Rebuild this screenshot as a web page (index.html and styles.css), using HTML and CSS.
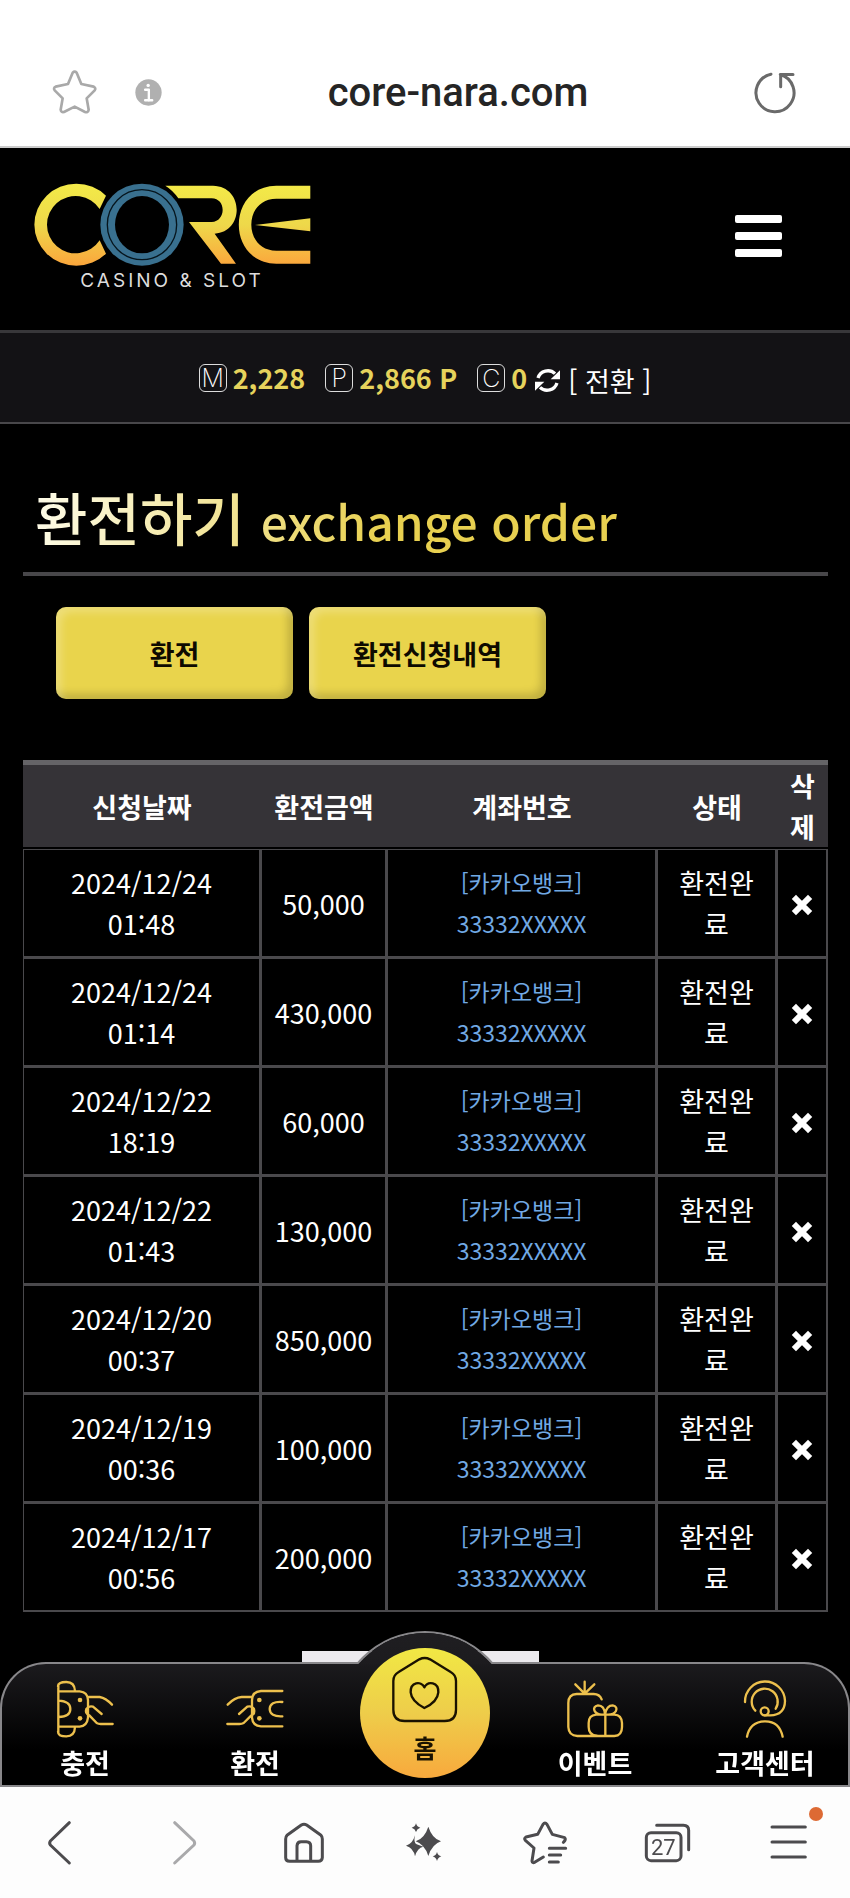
FILE: index.html
```html
<!DOCTYPE html>
<html lang="ko">
<head>
    <meta charset="UTF-8">
    <meta name="viewport" content="width=device-width, initial-scale=1">
    <title>환전하기</title>
    <link rel="stylesheet" href="styles.css">
</head>
<body>
<!-- 주소창 -->
<div class="address_bar">
    <div class="address_left">
        <button type="button" aria-label="즐겨찾기">
            <svg class="ico_star" viewBox="155 92 135 132"><path d="M217 100Q223 94 229 100L243 134L280 142Q288 147 283 153L259 177L265 211Q263 221 254 218L223 202L191 218Q182 220 181 211L187 177L163 153Q158 146 166 142L203 134Z"/></svg>
        </button>
        <button type="button" aria-label="사이트 정보">
            <svg class="ico_info" viewBox="404 118 80 80"><circle cx="444" cy="158" r="39"/><path d="M434 150h11v32M434 181h21"/><circle class="dot" cx="443" cy="137" r="5"/></svg>
        </button>
    </div>
    <div class="url">core-nara.com</div>
    <button type="button" class="reload" aria-label="새로고침">
        <svg viewBox="990 96 126 122"><path d="M1041 102A57 57 0 1 0 1069 103M1107 103H1070V140"/></svg>
    </button>
</div>

<header class="header">
    <a href="#" class="logo" aria-label="CORE">
        <svg viewBox="100 430 834 250">
            <defs>
                <linearGradient id="gold" gradientUnits="userSpaceOnUse" x1="0" y1="432" x2="0" y2="680">
                    <stop offset="0" stop-color="#f3ea48"/>
                    <stop offset=".5" stop-color="#eed84a"/>
                    <stop offset="1" stop-color="#fba53c"/>
                </linearGradient>
            </defs>
            <path fill="url(#gold)" d="M319 468A126 123 0 1 0 319 642L300 602A86 86 0 1 1 300 508Z"/>
            <path fill="url(#gold)" d="M497 438H640C734 440 734 577 645 582L709 672H664L568 547H636C680 545 680 476 636 476H536Q520 452 497 438Z"/>
            <path fill="url(#gold)" d="M932 438H830C680 440 680 670 830 672H932V633H830C730 633 730 477 830 477H932ZM766 556L932 536V575Z"/>
            <ellipse cx="427" cy="555" rx="125" ry="123" fill="#39708f"/>
            <ellipse cx="427" cy="555" rx="81" ry="86" fill="#000"/>
            <ellipse cx="427" cy="555" rx="104" ry="105" fill="none" stroke="#06151d" stroke-width="4"/>
        </svg>
        <span>CASINO &amp; SLOT</span>
    </a>
    <button type="button" class="menu_btn" aria-label="메뉴"><i></i><i></i><i></i></button>
</header>

<div class="my_info">
    <p><b>M</b><strong>2,228</strong></p>
    <p><b>P</b><strong>2,866 P</strong></p>
    <p><b>C</b><strong>0</strong></p>
    <button type="button">
        <svg viewBox="52 112 75 75"><path class="arc" d="M61 142A31 31 0 0 1 112 129M118 157A31 31 0 0 1 67 170"/><path d="M127 119V146H99ZM52 180V153H80Z"/></svg>
        <span>[ 전환 ]</span>
    </button>
</div>

<main class="content">
    <h1>환전하기 <small>exchange order</small></h1>
    <div class="tabs">
        <button type="button">환전</button>
        <button type="button">환전신청내역</button>
    </div>

    <table class="list">
        <thead>
            <tr>
                <th class="w_date">신청날짜</th>
                <th class="w_money">환전금액</th>
                <th class="w_bank">계좌번호</th>
                <th class="w_state">상태</th>
                <th class="w_del">삭제</th>
            </tr>
        </thead>
        <tbody>
            <tr>
                <td>2024/12/24 01:48</td>
                <td>50,000</td>
                <td class="bank">[카카오뱅크]<br>33332XXXXX</td>
                <td>환전완료</td>
                <td><button type="button" aria-label="삭제"><svg viewBox="0 0 20 20"><path d="M4 4L16 16M16 4L4 16"/></svg></button></td>
            </tr>
            <tr>
                <td>2024/12/24 01:14</td>
                <td>430,000</td>
                <td class="bank">[카카오뱅크]<br>33332XXXXX</td>
                <td>환전완료</td>
                <td><button type="button" aria-label="삭제"><svg viewBox="0 0 20 20"><path d="M4 4L16 16M16 4L4 16"/></svg></button></td>
            </tr>
            <tr>
                <td>2024/12/22 18:19</td>
                <td>60,000</td>
                <td class="bank">[카카오뱅크]<br>33332XXXXX</td>
                <td>환전완료</td>
                <td><button type="button" aria-label="삭제"><svg viewBox="0 0 20 20"><path d="M4 4L16 16M16 4L4 16"/></svg></button></td>
            </tr>
            <tr>
                <td>2024/12/22 01:43</td>
                <td>130,000</td>
                <td class="bank">[카카오뱅크]<br>33332XXXXX</td>
                <td>환전완료</td>
                <td><button type="button" aria-label="삭제"><svg viewBox="0 0 20 20"><path d="M4 4L16 16M16 4L4 16"/></svg></button></td>
            </tr>
            <tr>
                <td>2024/12/20 00:37</td>
                <td>850,000</td>
                <td class="bank">[카카오뱅크]<br>33332XXXXX</td>
                <td>환전완료</td>
                <td><button type="button" aria-label="삭제"><svg viewBox="0 0 20 20"><path d="M4 4L16 16M16 4L4 16"/></svg></button></td>
            </tr>
            <tr>
                <td>2024/12/19 00:36</td>
                <td>100,000</td>
                <td class="bank">[카카오뱅크]<br>33332XXXXX</td>
                <td>환전완료</td>
                <td><button type="button" aria-label="삭제"><svg viewBox="0 0 20 20"><path d="M4 4L16 16M16 4L4 16"/></svg></button></td>
            </tr>
            <tr>
                <td>2024/12/17 00:56</td>
                <td>200,000</td>
                <td class="bank">[카카오뱅크]<br>33332XXXXX</td>
                <td>환전완료</td>
                <td><button type="button" aria-label="삭제"><svg viewBox="0 0 20 20"><path d="M4 4L16 16M16 4L4 16"/></svg></button></td>
            </tr>
        </tbody>
    </table>
    <div class="more"><div></div></div>
</main>

<!-- 하단 고정 영역 -->
<div class="bottom">
    <nav class="quick">
        <a href="#">
            <svg viewBox="172 242 168 168">
                <path d="M175 258Q175 245 200 245T226 272M175 394Q175 408 200 408T226 380M176 255V397M177 273H240Q265 275 265 300V352Q262 378 240 379H177M177 301Q212 303 212 326T177 350M268 290H300Q318 293 337 313M306 341L280 319Q268 315 260 326Q255 340 269 345L291 368Q296 371 303 371H339"/>
                <circle class="dot" cx="241" cy="299" r="7"/><circle class="dot" cx="241" cy="354" r="7"/>
            </svg>
            <span>충전</span>
        </a>
        <a href="#">
            <svg viewBox="683 242 168 168">
                <path d="M849 272H785Q758 274 758 300V352Q760 377 785 378H849M849 305Q812 302 811 326Q812 350 849 348M755 290H727Q706 291 685 313M719 341L744 319Q757 315 764 326Q768 340 756 345L733 368Q728 371 720 371H684"/>
                <circle class="dot" cx="780" cy="299" r="7"/><circle class="dot" cx="780" cy="354" r="7"/>
            </svg>
            <span>환전</span>
        </a>
        <a href="#" class="home">
            <svg viewBox="-82 172 198 198">
                <path d="M0 179Q16 171 32 179L94 217Q110 226 110 244V330Q110 364 76 364H-44Q-78 364-78 330V244Q-78 226-62 217Z"/>
                <path d="M15 263C5 243-27 247-26 278C-24 302 2 318 15 325C30 318 55 302 57 278C58 247 26 243 15 263Z"/>
            </svg>
            <span>홈</span>
        </a>
        <a href="#">
            <svg viewBox="443 242 168 168">
                <path d="M547 297Q541 281 523 281H472Q447 282 447 308V380Q448 406 474 407H585Q608 406 608 380V368Q607 344 585 343H530Q508 345 508 368V380Q508 405 533 406M558 343V406M557 342C522 347 515 318 536 315C551 315 556 326 557 342C560 326 566 315 580 315C601 319 593 347 557 342M496 280V244M496 280L468 252M496 280L525 252"/>
            </svg>
            <span>이벤트</span>
        </a>
        <a href="#">
            <svg viewBox="954 242 168 168">
                <path d="M978 305A60 60 0 0 1 1098 302Q1097 344 1054 345H1037M1009 331A39 39 0 1 1 1070 325M984 409Q993 364 1037 363T1091 409"/>
                <circle cx="1037" cy="333" r="12"/>
            </svg>
            <span>고객센터</span>
        </a>
    </nav>
    <div class="toolbar">
        <button type="button" aria-label="뒤로"><svg viewBox="110 658 144 144"><path d="M207 669L150 724Q146 730 150 736L207 790"/></svg></button>
        <button type="button" class="off" aria-label="앞으로"><svg viewBox="474 658 144 144"><path d="M524 669L582 724Q586 730 582 736L524 790"/></svg></button>
        <button type="button" aria-label="홈"><svg viewBox="839 658 144 144"><path d="M903 676Q911 671 919 676L962 707Q966 711 966 718V774Q965 785 954 785H868Q856 784 856 774V718Q856 711 860 707ZM890 785V738Q891 726 902 726H918Q931 727 931 738V785"/></svg></button>
        <button type="button" aria-label="AI"><svg class="fill" viewBox="-57 658 144 144"><path d="M25 681Q36 716 63 725Q36 734 25 769Q14 734-13 725Q14 716 25 681ZM-12 671Q-9 682 1 684Q-9 687-12 697Q-15 687-25 684Q-15 682-12 671ZM51 757Q54 768 64 770Q54 773 51 784Q48 773 38 770Q48 768 51 757ZM-15 707Q-20 730-10 734L10 741Q-8 744-15 770Q-20 744-42 738Q-22 733-15 707Z"/></svg></button>
        <button type="button" aria-label="북마크"><svg viewBox="307 658 144 144"><path d="M431 728Q440 720 435 714L398 704L382 674Q376 666 370 674L354 704L319 712Q312 716 317 722L343 745L337 784Q338 791 345 788L371 772M389 746H438M389 766H423M389 787H416"/></svg></button>
        <button type="button" class="tabs_cnt" aria-label="탭"><svg viewBox="672 658 144 144"><rect x="679" y="699" width="104" height="84" rx="14"/><path d="M710 677H790Q806 678 806 692V750"/></svg><span>27</span></button>
        <button type="button" class="more_btn" aria-label="더보기"><svg viewBox="1036 658 144 144"><path d="M1057 682H1157M1057 727H1157M1057 772H1157"/></svg><em></em></button>
    </div>
</div>
</body>
</html>
```

FILE: styles.css
```css
* {
    margin: 0;
    padding: 0;
    box-sizing: border-box;
}
body {
    min-height: 100vh;
    background: #000;
    color: #fff;
    font-family: 'Noto Sans CJK KR', sans-serif;
    font-size: 27px;
    line-height: 41px;
}
button {
    border: 0;
    background: none;
    color: inherit;
    font: inherit;
    cursor: pointer;
}
a {
    color: inherit;
    text-decoration: none;
}
svg {
    display: block;
    overflow: visible;
    fill: none;
    stroke-linecap: round;
    stroke-linejoin: round;
}

/* 주소창 */
.address_bar {
    display: grid;
    grid-template-columns: auto 1fr auto;
    align-items: center;
    height: 148px;
    padding: 38px 54px 0 52px;
    background: #fff;
    border-bottom: 2px solid #ccc;
}
.address_left {
    display: flex;
    align-items: center;
    gap: 38px;
}
.ico_star {
    width: 45px;
    height: 44px;
    stroke: #a9a9a9;
    stroke-width: 8;
}
.ico_info {
    width: 27px;
    height: 27px;
    fill: #b0b0b0;
}
.ico_info path {
    fill: none;
    stroke: #fff;
    stroke-width: 7;
}
.ico_info .dot {
    fill: #fff;
}
.url {
    color: #252525;
    font-family: Roboto, sans-serif;
    font-size: 40px;
    font-weight: 500;
    text-align: center;
}
.reload svg {
    width: 42px;
    height: 41px;
    stroke: #6a6a6a;
    stroke-width: 9;
}

/* 상단 */
.header {
    display: flex;
    justify-content: space-between;
    align-items: flex-start;
    height: 182px;
    padding: 35px 68px 0 33px;
}
.logo {
    width: 278px;
    text-align: center;
}
.logo span {
    display: block;
    color: #ddd;
    font-family: Inter, sans-serif;
    font-size: 19px;
    line-height: 30px;
    letter-spacing: 3px;
}
.menu_btn {
    display: grid;
    gap: 9px;
    width: 47px;
    padding-top: 32px;
}
.menu_btn i {
    height: 8px;
    border-radius: 2px;
    background: #fff;
}

.my_info {
    display: flex;
    justify-content: center;
    align-items: center;
    gap: 20px;
    height: 94px;
    background: #131215;
    border-top: 3px solid #38373a;
    border-bottom: 2px solid #48474a;
}
.my_info p {
    display: flex;
    align-items: center;
    gap: 6px;
}
.my_info b {
    width: 28px;
    height: 28px;
    border: 1px solid #ddd;
    border-radius: 6px;
    font-family: Inter, sans-serif;
    font-size: 25px;
    font-weight: 200;
    line-height: 26px;
    text-align: center;
}
.my_info strong {
    color: #e6d35c;
}
.my_info button {
    display: flex;
    align-items: center;
    gap: 8px;
    margin-left: -12px;
    padding-top: 5px;
}
.my_info svg {
    width: 25px;
    height: 25px;
    fill: #fff;
}
.my_info .arc {
    fill: none;
    stroke: #fff;
    stroke-width: 10;
    stroke-linecap: butt;
}

/* 본문 */
.content {
    padding: 54px 22px 0 23px;
}
h1 {
    padding: 0 12px 14px;
    border-bottom: 4px solid #48474a;
    font-size: 57px;
    font-weight: 500;
    line-height: 76px;
    background: linear-gradient(100deg, #fffef0, #e8d050 45%) padding-box;
    -webkit-background-clip: text;
    background-clip: text;
    color: transparent;
}
h1 small {
    font-size: 48px;
    font-weight: 500;
}
.tabs {
    display: flex;
    gap: 16px;
    padding: 31px 33px 61px;
}
.tabs button {
    width: 237px;
    height: 92px;
    border-radius: 10px;
    background: #e9d44c;
    box-shadow: inset 5px 5px 8px rgba(255, 255, 255, .25), inset -5px -5px 8px rgba(0, 0, 0, .18);
    color: #0d0a00;
    font-weight: 700;
}

.list {
    width: 100%;
    table-layout: fixed;
    border-collapse: separate;
    border-spacing: 0;
    text-align: center;
}
.list th {
    height: 89px;
    padding: 0 10px;
    background: #353337;
    border-top: 5px solid #656467;
    border-bottom: 2px solid #000;
    font-weight: 700;
}
.list td {
    padding: 12px;
    border: solid #4a494c;
    border-width: 1px 2px 2px 1px;
}
.list .w_date {
    width: 238px;
}
.list .w_money {
    width: 126px;
}
.list .w_state {
    width: 120px;
}
.list .w_del {
    width: 51px;
}
.list td:nth-child(1) {
    padding: 12px 40px;
}
.list td:nth-child(2) {
    padding: 12px 0;
}
.list .bank {
    color: #71a9e4;
    font-size: 23px;
}
.list button {
    display: block;
    margin: 0 auto;
    padding-top: 4px;
}
.list svg {
    width: 20px;
    height: 20px;
    stroke: #fff;
    stroke-width: 6;
    stroke-linecap: square;
}
.more {
    padding: 39px 10px 0 0;
}
.more div {
    width: 237px;
    height: 60px;
    margin: 0 auto;
    background: #eceaee;
}

/* 하단 고정 영역 */
.bottom {
    position: fixed;
    left: 0;
    right: 0;
    bottom: 0;
}
.quick {
    display: grid;
    grid-template-columns: repeat(5, 1fr);
    height: 125px;
    border-radius: 46px 46px 0 0;
    background: linear-gradient(#1c1b1e, #000 70%);
    box-shadow: inset 0 0 0 2px #88878a;
    font-weight: 700;
}
.quick a {
    display: flex;
    flex-direction: column;
    align-items: center;
    gap: 5px;
    padding-top: 19px;
    white-space: nowrap;
}
.quick svg {
    width: 56px;
    height: 56px;
    stroke: #edc04d;
    stroke-width: 7;
}
.quick .dot {
    fill: #edc04d;
    stroke: none;
}
.quick .home {
    position: relative;
    z-index: 0;
    padding-top: 0;
    gap: 4px;
    color: #1a1200;
}
/* 홈 버튼 뒤의 반원 */
.quick .home::before {
    content: '';
    position: absolute;
    z-index: -2;
    left: 50%;
    top: -29px;
    width: 174px;
    height: 174px;
    transform: translateX(-50%);
    border-radius: 50%;
    background: linear-gradient(#1f1e21, #1c1b1e 20%);
    box-shadow: 0 0 0 2px #88878a;
    clip-path: inset(-2px -2px 143px);
}
.quick .home::after {
    content: '';
    position: absolute;
    z-index: -1;
    left: 50%;
    top: -14px;
    width: 130px;
    height: 130px;
    transform: translateX(-50%);
    border-radius: 50%;
    background: linear-gradient(#f1e844, #eecd4a 50%, #f8a93d);
}
.quick .home svg {
    width: 66px;
    height: 66px;
    margin-top: -5px;
    stroke: #1a1200;
}
.quick .home span {
    font-size: 25px;
}

.toolbar {
    display: grid;
    grid-template-columns: repeat(7, 1fr);
    height: 111px;
    background: #fdfdfd;
    color: #4c4b4e;
}
.toolbar button {
    display: grid;
    place-items: center;
    position: relative;
}
.toolbar svg {
    width: 48px;
    height: 48px;
    stroke: currentColor;
    stroke-width: 9;
}
.toolbar .fill {
    fill: currentColor;
    stroke: none;
}
.toolbar .off {
    color: #a9a9ab;
}
.tabs_cnt span {
    position: absolute;
    left: 50%;
    top: 50%;
    width: 35px;
    margin-left: -22px;
    font-family: Roboto, sans-serif;
    font-size: 22px;
    line-height: 10px;
    text-align: center;
}
.more_btn em {
    position: absolute;
    right: 27px;
    top: 20px;
    width: 14px;
    height: 14px;
    border-radius: 50%;
    background: #dd6a34;
}
```
